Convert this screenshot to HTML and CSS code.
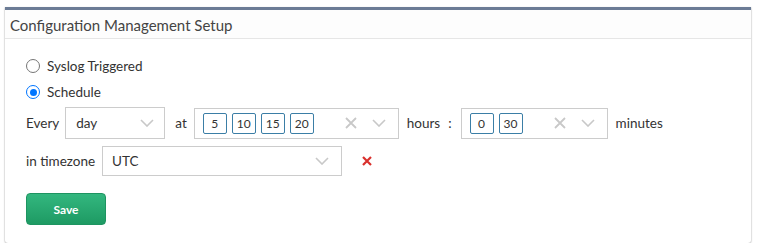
FILE: index.html
```html
<!DOCTYPE html>
<html>
<head>
<meta charset="utf-8">
<link rel="stylesheet" href="styles.css">
</head>
<body>
<div class="panel">
  <div class="panel-head">Configuration Management Setup</div>
  <div class="panel-body">
    <label class="radio"><span class="rb"></span>Syslog Triggered</label>
    <label class="radio"><span class="rb on"></span>Schedule</label>
    <div class="row">
      <span class="lbl">Every</span>
      <div class="select sel-day"><span class="val">day</span>
        <svg class="chev" width="14" height="8" viewBox="0 0 14 8"><path d="M1 1l6 6 6-6" fill="none" stroke="#c8c8c8" stroke-width="1.6"/></svg>
      </div>
      <span class="lbl at">at</span>
      <div class="multi multi-h">
        <div class="tags"><span class="tag">5</span><span class="tag">10</span><span class="tag">15</span><span class="tag">20</span></div>
        <svg class="clr" width="12" height="12" viewBox="0 0 12 12"><path d="M1 1l10 10M11 1L1 11" stroke="#c8c8c8" stroke-width="1.8"/></svg>
        <svg class="chev" width="14" height="8" viewBox="0 0 14 8"><path d="M1 1l6 6 6-6" fill="none" stroke="#c8c8c8" stroke-width="1.6"/></svg>
      </div>
      <span class="lbl hours">hours</span>
      <span class="lbl colon">:</span>
      <div class="multi multi-m">
        <div class="tags"><span class="tag">0</span><span class="tag">30</span></div>
        <svg class="clr" width="12" height="12" viewBox="0 0 12 12"><path d="M1 1l10 10M11 1L1 11" stroke="#c8c8c8" stroke-width="1.8"/></svg>
        <svg class="chev" width="14" height="8" viewBox="0 0 14 8"><path d="M1 1l6 6 6-6" fill="none" stroke="#c8c8c8" stroke-width="1.6"/></svg>
      </div>
      <span class="lbl">minutes</span>
    </div>
    <div class="row row-tz">
      <span class="lbl">in timezone</span>
      <div class="select sel-tz"><span class="val">UTC</span>
        <svg class="chev" width="14" height="8" viewBox="0 0 14 8"><path d="M1 1l6 6 6-6" fill="none" stroke="#c8c8c8" stroke-width="1.6"/></svg>
      </div>
      <svg class="del" width="10" height="10" viewBox="0 0 10 10"><path d="M1 1l8 8M9 1L1 9" stroke="#d9302c" stroke-width="2.2"/></svg>
    </div>
    <button class="btn-save">Save</button>
  </div>
</div>
</body>
</html>
```

FILE: styles.css
```css
html, body {
  margin: 0;
  padding: 0;
  background: #fff;
}
body {
  font-family: Lato, "Liberation Sans", sans-serif;
  color: #333;
  padding: 7px 8px 0 5px;
}
.panel {
  border-top: 3px solid #6c7c96;
  background: #fff;
  box-shadow: 0 1px 2px rgba(0,0,0,0.25), 1px 0 1px rgba(0,0,0,0.06), -1px 0 1px rgba(0,0,0,0.06);
  border-radius: 0 0 3px 3px;
  height: 236px;
  box-sizing: border-box;
}
.panel-head {
  height: 29px;
  box-sizing: border-box;
  border-bottom: 1px solid #e6e6e6;
  padding: 6px 5px 0;
  font-size: 15px;
  color: #444;
  background: #fdfdfd;
}
.panel-body {
  padding: 19px 21px 0;
  display: flex;
  flex-direction: column;
  align-items: flex-start;
}
.radio {
  display: flex;
  align-items: center;
  gap: 7px;
  font-size: 13.5px;
  height: 16px;
  margin-bottom: 10px;
}
.rb {
  width: 12px;
  height: 12px;
  border: 1px solid #767676;
  border-radius: 50%;
  box-sizing: content-box;
  display: inline-block;
  position: relative;
}
.rb.on {
  border-color: #0075ff;
}
.rb.on::after {
  content: "";
  position: absolute;
  left: 2.5px;
  top: 2.5px;
  width: 7px;
  height: 7px;
  border-radius: 50%;
  background: #0075ff;
}
.row {
  display: flex;
  align-items: center;
  font-size: 13.5px;
  margin-top: -3px;
}
.lbl {
  white-space: nowrap;
}
.select, .multi {
  display: flex;
  align-items: center;
  border: 1px solid #ccc;
  box-sizing: border-box;
  background: #fff;
}
.sel-day {
  width: 100px;
  height: 32px;
  margin-left: 6px;
  padding: 0 10px;
}
.val {
  flex: 1;
}
.at {
  margin-left: 10px;
}
.multi {
  height: 31px;
  padding: 0 12px 0 8px;
  margin-left: 7px;
}
.multi-h {
  width: 205px;
}
.multi-m {
  width: 147px;
  margin-left: 9px;
}
.tags {
  flex: 1;
  display: flex;
  gap: 5px;
}
.tag {
  width: 24px;
  height: 21px;
  box-sizing: border-box;
  border: 1px solid #3b7ea6;
  border-radius: 2px;
  font-size: 12px;
  display: flex;
  align-items: center;
  justify-content: center;
  color: #333;
}
.clr {
  margin-right: 15px;
}
.hours {
  margin-left: 8px;
}
.colon {
  margin-left: 8px;
}
.multi-m + .lbl {
  margin-left: 8px;
}
.row-tz {
  margin-top: 7px;
}
.sel-tz {
  width: 240px;
  height: 30px;
  margin-left: 7px;
  padding: 0 12px 0 9px;
}
.del {
  margin-left: 20px;
}
.btn-save {
  margin-top: 17px;
  width: 80px;
  height: 32px;
  border: 1px solid #1e9461;
  border-radius: 4px;
  background: linear-gradient(#33b77f, #1e9a63);
  color: #fff;
  font-family: Lato, "Liberation Sans", sans-serif;
  font-weight: bold;
  font-size: 12px;
}
```
